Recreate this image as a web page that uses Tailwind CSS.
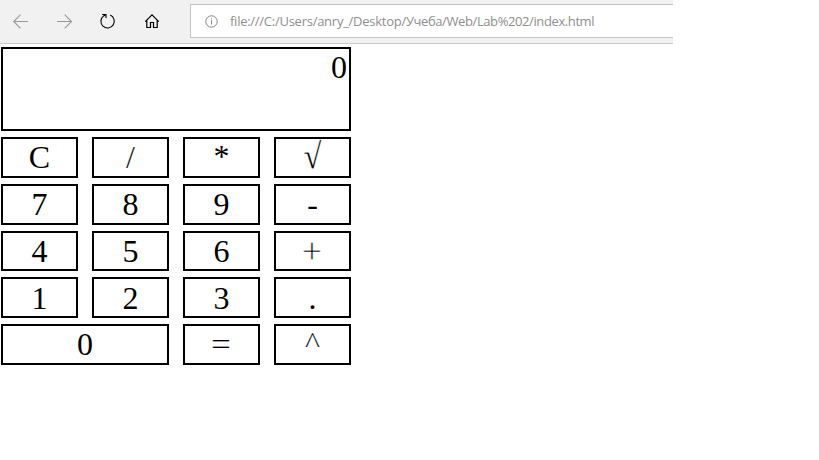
<!DOCTYPE html>
<html lang="ru">
<head>
<meta charset="utf-8">
<title>Calculator</title>
<script src="https://cdn.jsdelivr.net/npm/@tailwindcss/browser@4"></script>
</head>
<body class="bg-white text-black w-[819px] h-[460px] overflow-hidden">
<header class="w-[673px] h-11 bg-[#f1f1f1] border-b border-[#c8c8c8] flex items-start">
  <nav class="w-[190px] h-[43px] shrink-0">
    <svg class="block" width="190" height="43" viewBox="0 0 190 43" fill="none">
      <g stroke="#999" stroke-width="1.1">
        <path d="M28 21.5H13.5M20.5 14.7L13.7 21.5L20.5 28.3"/>
        <path d="M57 21.5H71.5M64.7 14.7L71.5 21.5L64.7 28.3"/>
      </g>
      <g stroke="#000" stroke-width="1.1">
        <path d="M110.2 15.1A6.7 6.7 0 1 1 103.6 15.9L106 14.5"/>
        <path d="M102.2 14.5H106V18"/>
        <path d="M145.2 21.7L152 14.9L158.8 21.7M146.8 20.5V27.5H150.5V22.5H153.5V27.5H157.2V20.5" stroke-width="1.2"/>
      </g>
    </svg>
  </nav>
  <div class="mt-1 h-[34px] flex-1 min-w-0 bg-white border border-r-0 border-[#c3c3c3] flex items-center pl-[14px]">
    <svg class="shrink-0" width="13" height="13" viewBox="0 0 13 13" fill="none" stroke="#858585">
      <circle cx="6.5" cy="6.5" r="5.7"/>
      <path d="M6.5 5.3V9.5M6.5 3.3V4.4"/>
    </svg>
    <span class="ml-3 whitespace-nowrap text-[13px] leading-4 tracking-[-0.26px] text-[#8e8e8e] font-['Open_Sans','Noto_Sans',sans-serif]">file:///C:/Users/anry_/Desktop/<span class="tracking-[-0.4px]">Учеба/Web/Lab%202/index.html</span></span>
  </div>
</header>
<main class="ml-px mt-[3px] w-[350px] font-['Liberation_Serif',serif] text-[32px] leading-[37px] text-center">
  <div class="h-[84px] border-2 border-black text-right pr-[2px]">0</div>
  <div class="mt-1.5 grid grid-cols-[repeat(4,77px)] grid-rows-[41px_41px_40px_41px_41px] gap-x-3.5 gap-y-1.5">
    <div class="border-2 border-black">C</div>
    <div class="border-2 border-black"><span class="[-webkit-text-stroke:0.2px_white]">/</span></div>
    <div class="border-2 border-black"><span class="inline-block -translate-y-px">*</span></div>
    <div class="border-2 border-black"><span class="inline-block h-[37px] origin-[50%_29px] scale-y-[1.12] [-webkit-text-stroke:0.2px_white]">√</span></div>
    <div class="border-2 border-black">7</div>
    <div class="border-2 border-black">8</div>
    <div class="border-2 border-black">9</div>
    <div class="border-2 border-black">-</div>
    <div class="border-2 border-black">4</div>
    <div class="border-2 border-black">5</div>
    <div class="border-2 border-black">6</div>
    <div class="border-2 border-black"><span class="inline-block scale-110 [-webkit-text-stroke:0.4px_white]">+</span></div>
    <div class="border-2 border-black pt-px">1</div>
    <div class="border-2 border-black pt-px">2</div>
    <div class="border-2 border-black pt-px">3</div>
    <div class="border-2 border-black pt-px">.</div>
    <div class="border-2 border-black col-span-2">0</div>
    <div class="border-2 border-black"><span class="inline-block scale-x-110 [-webkit-text-stroke:0.15px_white]">=</span></div>
    <div class="border-2 border-black"><span class="inline-block origin-[50%_10px] scale-y-90 [-webkit-text-stroke:0.25px_white]">^</span></div>
  </div>
</main>
</body>
</html>
